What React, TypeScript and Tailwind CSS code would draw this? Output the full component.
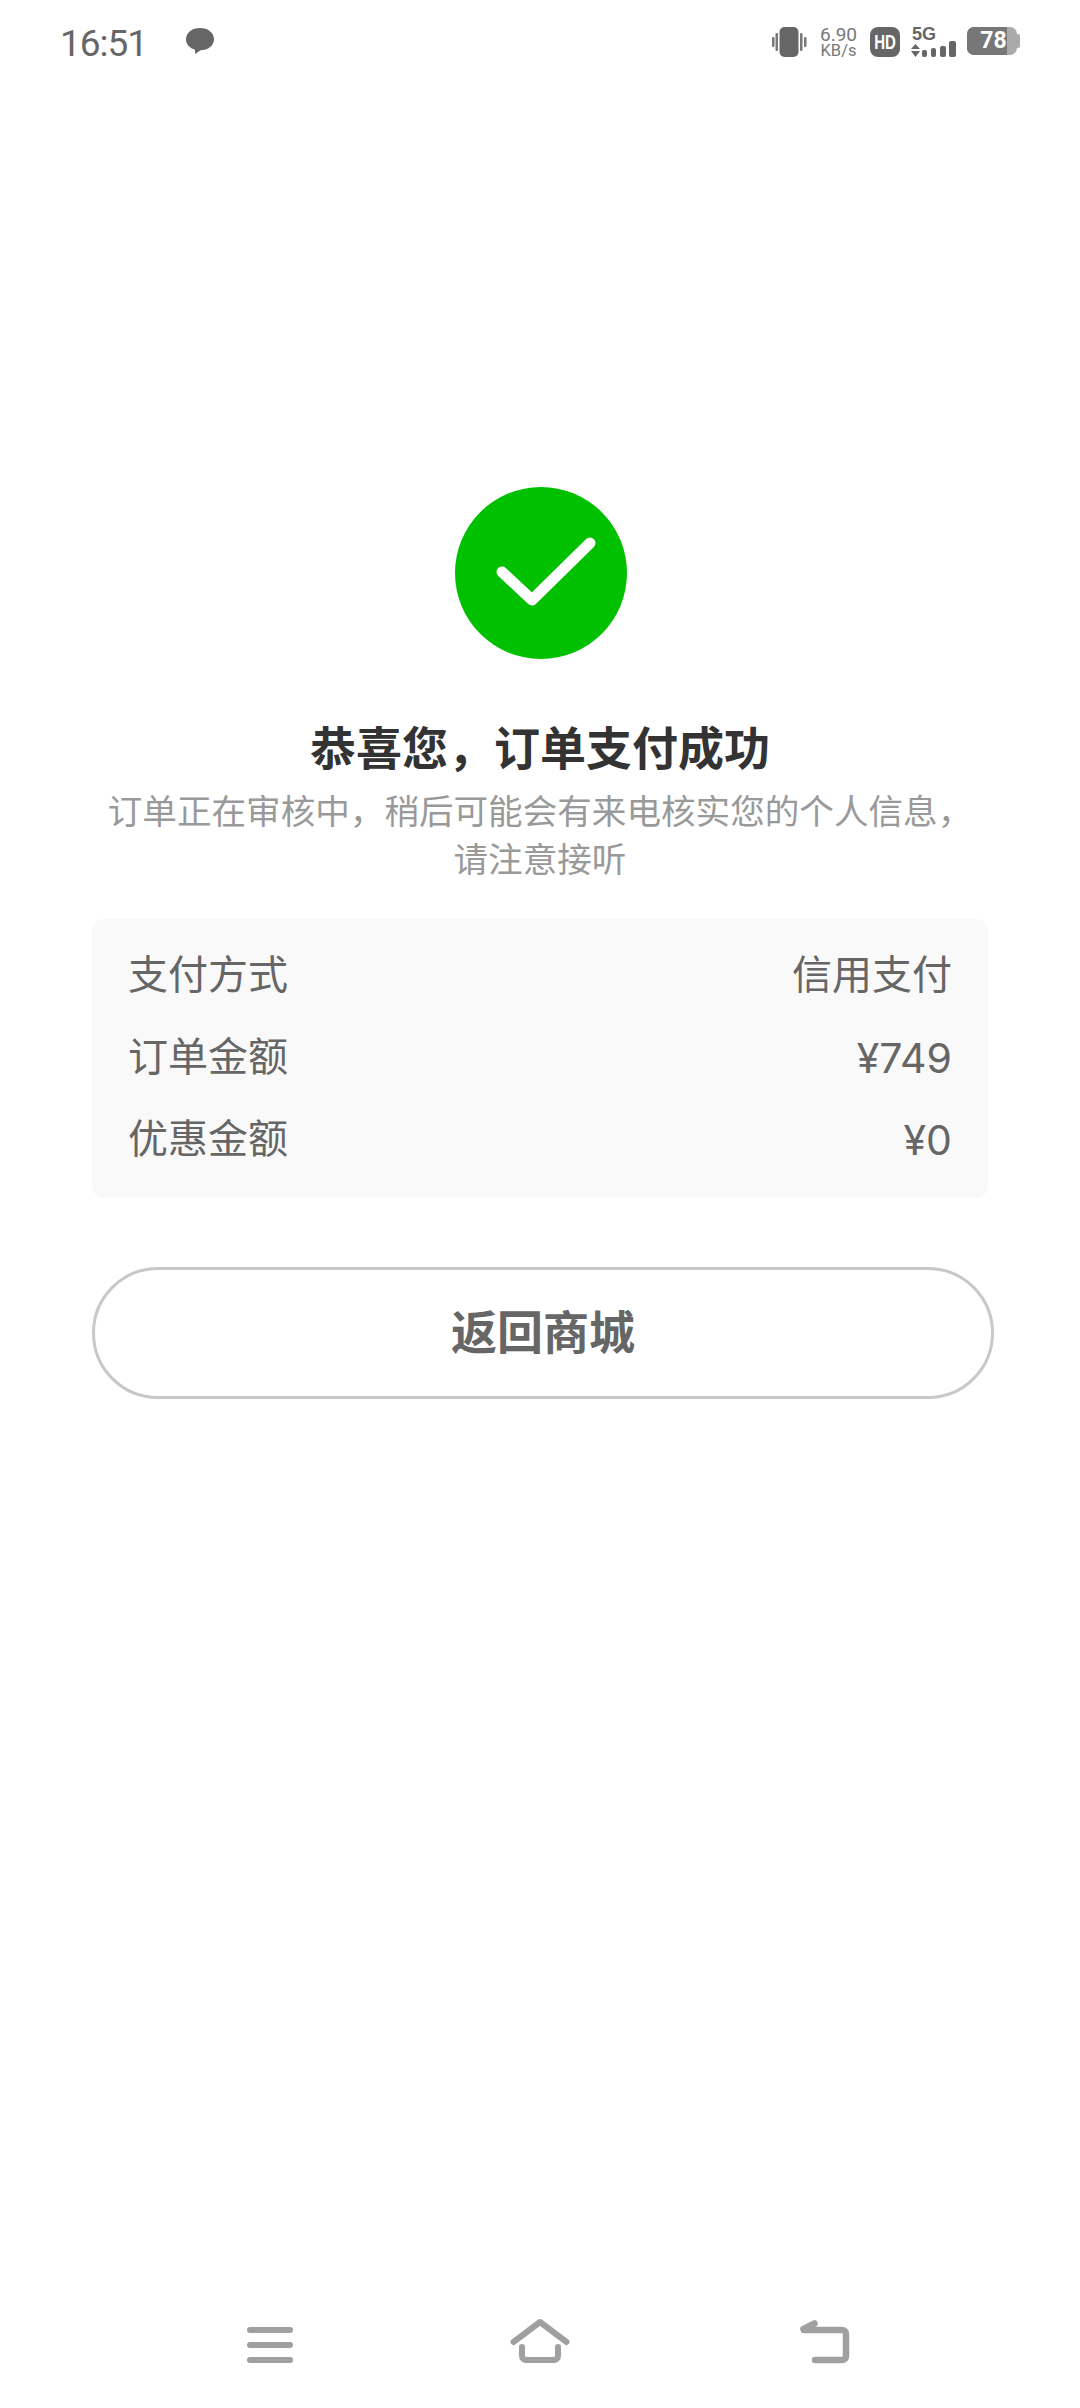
import React from "react";

function Row({ label, value, numeric }: { label: string; value: string; numeric?: boolean }) {
  return (
    <div className="flex h-[82px] items-center justify-between text-[40px] leading-[82px] text-[#666666]">
      <span>{label}</span>
      {numeric ? (
        <span className="font-['Inter','Noto_Sans_CJK_SC',sans-serif] text-[41px] leading-[82px]">{value}</span>
      ) : (
        <span>{value}</span>
      )}
    </div>
  );
}

function StatusBar() {
  return (
    <div className="flex h-[86px] items-start justify-between pl-[60px] pr-[60px] pt-[22px] text-[#666666]">
      <div className="flex items-start">
        <span className="font-['Roboto',sans-serif] text-[37px] leading-[44px] tracking-[-1px] text-[#666666]">16:51</span>
        <svg className="ml-[38px] mt-[5px]" width="30" height="28" viewBox="0 0 32 30">
          <path d="M16 1C7.5 1 1 6.2 1 13c0 5.6 4.3 9.6 9.5 11.2l.5 4.8 5.5-4.1C24.8 24.8 31 19.6 31 13 31 6.2 24.5 1 16 1Z" fill="#666666" />
        </svg>
      </div>
      <div className="flex h-[32px] items-start pt-[5px]">
        <svg width="36" height="30" viewBox="0 0 36 30">
          <rect x="8.5" y="0" width="19" height="30" rx="5" fill="#666666" />
          <rect x="1" y="10" width="2.5" height="10" rx="1" fill="#777777" />
          <rect x="4.5" y="6" width="2.5" height="18" rx="1" fill="#777777" />
          <rect x="29" y="6" width="2.5" height="18" rx="1" fill="#777777" />
          <rect x="33" y="10" width="2.5" height="10" rx="1" fill="#777777" />
        </svg>
        <div className="ml-[13px] flex w-[37px] flex-col items-center font-['Roboto',sans-serif] text-[#777777]">
          <span className="whitespace-nowrap text-[19px] leading-[16px]">6.90</span>
          <span className="whitespace-nowrap text-[16.5px] leading-[16px]">KB/s</span>
        </div>
        <div className="ml-[13px] flex h-[30px] w-[30px] items-center justify-center rounded-[8px] bg-[#666666] font-['Liberation_Sans',sans-serif] text-[15px] font-bold leading-[30px] text-white">
          <span className="inline-block scale-y-[1.4]">HD</span>
        </div>
        <div className="ml-[11px] flex h-[30px] w-[45px] flex-col">
          <span className="pl-[1px] font-['Liberation_Sans',sans-serif] text-[18px] font-bold leading-[14px] text-[#666666]">5G</span>
          <svg width="45" height="16" viewBox="0 14 45 16" className="shrink-0">
            <path d="M4.5 17l4.5 5H0Z M0 24h9l-4.5 6Z" fill="#666666" />
            <rect x="11" y="23" width="5" height="7" rx="2" fill="#666666" />
            <rect x="20" y="21" width="5" height="9" rx="2" fill="#666666" />
            <rect x="29" y="19" width="6" height="11" rx="2" fill="#666666" />
            <rect x="38" y="14" width="7" height="16" rx="2" fill="#666666" />
          </svg>
        </div>
        <div className="ml-[11px] flex h-[28px] items-center self-center">
          <div className="relative flex h-[28px] w-[50px] items-center justify-center overflow-hidden rounded-[7px] bg-[#aaaaaa]">
            <div className="absolute inset-y-0 left-0 w-[40px] bg-[#777777]" />
            <span className="relative pl-[3px] font-['Roboto',sans-serif] text-[23px] font-bold leading-[28px] text-white">78</span>
          </div>
          <div className="h-[14px] w-[3px] rounded-r-[2px] bg-[#aaaaaa]" />
        </div>
      </div>
    </div>
  );
}

export default function App() {
  return (
    <div className="flex h-[2408px] w-[1080px] flex-col bg-white font-['Roboto','Noto_Sans_CJK_SC',sans-serif]">
      <StatusBar />
      <main className="flex flex-1 flex-col">
        <div className="mt-[401px] flex justify-center">
          <div className="ml-[2px] flex h-[172px] w-[172px] items-center justify-center rounded-full bg-[#00c000]">
            <svg width="172" height="172" viewBox="0 0 172 172">
              <path d="M47 85l30 28 58-57" fill="none" stroke="#ffffff" strokeWidth="11" strokeLinecap="round" strokeLinejoin="round" />
            </svg>
          </div>
        </div>
        <h1 className="mt-[65px] text-center text-[46px] font-bold leading-[50px] text-[#333333]">恭喜您，订单支付成功</h1>
        <p className="mt-[14px] ml-[95px] w-[890px] text-center text-[34.6px] leading-[48px] text-[#999999]">
          订单正在审核中，稍后可能会有来电核实您的个人信息，请注意接听
        </p>
        <div className="ml-[92px] mt-[35px] w-[896px] rounded-[12px] bg-[#f9f9f9] px-[36px] pb-[17px] pt-[16px]">
          <Row label="支付方式" value="信用支付" />
          <Row label="订单金额" value="¥749" numeric />
          <Row label="优惠金额" value="¥0" numeric />
        </div>
        <button className="ml-[92px] mt-[69px] flex h-[132px] w-[902px] items-center justify-center rounded-full border-[3px] border-[#c8c8c8] bg-white text-[46px] font-bold leading-[50px] text-[#666666]">
          返回商城
        </button>
      </main>
      <nav className="flex h-[118px] items-start pl-[247px] pt-[26px]">
        <svg width="46" height="50" viewBox="0 0 46 50">
          <g fill="#a0a0a0">
            <rect x="0" y="11" width="46" height="6" rx="3" />
            <rect x="0" y="26" width="46" height="6" rx="3" />
            <rect x="0" y="41" width="46" height="6" rx="3" />
          </g>
        </svg>
        <svg width="60" height="50" viewBox="0 0 60 50" className="ml-[217px]">
          <g fill="none" stroke="#a0a0a0" strokeWidth="6" strokeLinecap="round" strokeLinejoin="round">
            <path d="M3.5 26 30 6l26.5 20" />
            <path d="M12 31v9a4 4 0 0 0 4 4h28a4 4 0 0 0 4-4v-9" />
          </g>
        </svg>
        <svg width="52" height="50" viewBox="0 0 52 50" className="ml-[229px]">
          <g fill="none" stroke="#a0a0a0" strokeWidth="6.5" strokeLinecap="round" strokeLinejoin="round">
            <path d="M5 14h38a4 4 0 0 1 4 4v22a4 4 0 0 1-4 4H16" />
            <path d="M4.5 13 15.5 7.5" />
          </g>
        </svg>
      </nav>
    </div>
  );
}
